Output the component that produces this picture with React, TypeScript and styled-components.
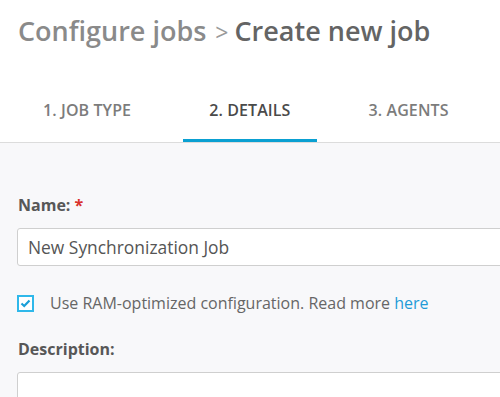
import React, { useState } from 'react';
import styled, { createGlobalStyle } from 'styled-components';

const GlobalStyle = createGlobalStyle`
  html, body {
    margin: 0;
    padding: 0;
    background: #f8f8fa;
    font-family: 'Open Sans', 'Noto Sans', sans-serif;
    overflow: hidden;
  }
`;

const Page = styled.div`
  width: 500px;
  height: 397px;
  overflow: hidden;
  background: #f8f8fa;
`;

const Header = styled.header`
  background: #fff;
  padding: 14px 0 0;
  border-bottom: 1px solid #dcdcdc;
`;

const Title = styled.h1`
  margin: 0 0 0 18px;
  height: 34px;
  font-size: 27px;
  line-height: 34px;
  font-weight: 600;
  color: #8a8a8a;
  white-space: nowrap;
`;

const Crumb = styled.span`
  color: #9a9a9a;
  font-size: 23px;
  line-height: 0;
  margin: 0 6px 0 9px;
  font-weight: 400;
`;

const Current = styled.span`
  color: #646464;
`;

const Tabs = styled.nav`
  display: flex;
  gap: 26px;
  padding: 0 0 0 17px;
  margin-top: 34px;
`;

const Tab = styled.div<{ $active?: boolean }>`
  padding: 17px 26px 18px;
  font-size: 16px;
  line-height: 22px;
  font-weight: 600;
  letter-spacing: 0.1px;
  text-transform: uppercase;
  color: ${(p) => (p.$active ? '#4a4a4a' : '#7c7c7c')};
  border-bottom: 3px solid ${(p) => (p.$active ? '#0aa0d2' : 'transparent')};
  white-space: nowrap;
  cursor: pointer;
`;

const Body = styled.section`
  padding: 51px 0 0 17px;
`;

const Label = styled.label`
  display: block;
  font-size: 16px;
  line-height: 22px;
  font-weight: 700;
  color: #575757;
  margin: 0 0 12px 1px;
`;

const Required = styled.span`
  color: #d9302c;
  margin-left: 4px;
`;

const TextInput = styled.input`
  box-sizing: border-box;
  display: block;
  width: 520px;
  height: 38px;
  padding: 0 10px;
  border: 1px solid #cfcfcf;
  border-radius: 3px;
  background: #fff;
  font-family: inherit;
  font-size: 17.4px;
  color: #555;
  outline: none;
`;

const TextArea = styled.textarea`
  box-sizing: border-box;
  display: block;
  width: 520px;
  height: 80px;
  padding: 8px 10px;
  border: 1px solid #cfcfcf;
  border-radius: 3px;
  background: #fff;
  font-family: inherit;
  font-size: 17px;
  resize: none;
  outline: none;
`;

const CheckRow = styled.label`
  display: flex;
  align-items: center;
  gap: 16px;
  margin: 26px 0 24px;
  font-size: 16px;
  line-height: 22px;
  color: #666;
  cursor: pointer;
`;

const Box = styled.span<{ $checked: boolean }>`
  box-sizing: border-box;
  width: 17px;
  height: 17px;
  border: 2px solid #2fb8ea;
  background: #fff;
  display: flex;
  align-items: center;
  justify-content: center;
  flex-shrink: 0;
`;

const Link = styled.a`
  color: #1e9bd7;
  text-decoration: none;
`;

export default function App() {
  const [name, setName] = useState('New Synchronization Job');
  const [ramOpt, setRamOpt] = useState(true);

  return (
    <Page>
      <GlobalStyle />
      <Header>
        <Title>
          Configure jobs<Crumb>&gt;</Crumb>
          <Current>Create new job</Current>
        </Title>
        <Tabs>
          <Tab>1. Job type</Tab>
          <Tab $active>2. Details</Tab>
          <Tab>3. Agents</Tab>
        </Tabs>
      </Header>
      <Body>
        <Label>
          Name:<Required>*</Required>
        </Label>
        <TextInput value={name} onChange={(e) => setName(e.target.value)} />
        <CheckRow onClick={() => setRamOpt(!ramOpt)}>
          <Box $checked={ramOpt}>
            {ramOpt && (
              <svg width="11" height="9" viewBox="0 0 11 9">
                <path d="M1.5 4.5 L4.2 7 L9.5 1.5" fill="none" stroke="#1a9fd8" strokeWidth="2.2" />
              </svg>
            )}
          </Box>
          <span>
            Use RAM-optimized configuration. Read more <Link href="#">here</Link>
          </span>
        </CheckRow>
        <Label>Description:</Label>
        <TextArea />
      </Body>
    </Page>
  );
}
